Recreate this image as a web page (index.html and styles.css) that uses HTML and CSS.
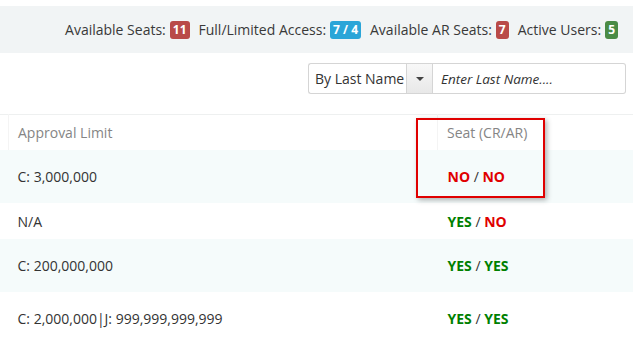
FILE: index.html
```html
<!DOCTYPE html>
<html lang="en">
<head>
  <meta charset="UTF-8">
  <meta name="viewport" content="width=device-width, initial-scale=1.0">
  <title>Users</title>
  <link rel="stylesheet" href="styles.css">
</head>
<body>
  <div class="stats-bar">
    <span class="stat">Available Seats: <span class="badge badge-red">11</span></span>
    <span class="stat">Full/Limited Access: <span class="badge badge-blue">7 / 4</span></span>
    <span class="stat">Available AR Seats: <span class="badge badge-red">7</span></span>
    <span class="stat">Active Users: <span class="badge badge-green">5</span></span>
  </div>

  <div class="search-row">
    <div class="select-box">By Last Name</div>
    <div class="select-btn"><span class="caret"></span></div>
    <input class="search-input" type="text" placeholder="Enter Last Name....">
  </div>

  <div class="table-wrap">
    <table class="users-table">
      <thead>
        <tr>
          <th class="spacer"></th>
          <th class="col-limit">Approval Limit</th>
          <th class="col-seat">Seat (CR/AR)</th>
        </tr>
      </thead>
      <tbody>
        <tr class="tall odd">
          <td class="spacer"></td>
          <td>C: 3,000,000</td>
          <td class="seat"><span class="no">NO</span> / <span class="no">NO</span></td>
        </tr>
        <tr class="short">
          <td class="spacer"></td>
          <td>N/A</td>
          <td class="seat"><span class="yes">YES</span> / <span class="no">NO</span></td>
        </tr>
        <tr class="tall odd">
          <td class="spacer"></td>
          <td>C: 200,000,000</td>
          <td class="seat"><span class="yes">YES</span> / <span class="yes">YES</span></td>
        </tr>
        <tr class="tall">
          <td class="spacer"></td>
          <td>C: 2,000,000|J: 999,999,999,999</td>
          <td class="seat"><span class="yes">YES</span> / <span class="yes">YES</span></td>
        </tr>
      </tbody>
    </table>
    <div class="highlight"></div>
  </div>
</body>
</html>
```

FILE: styles.css
```css
body {
  margin: 0;
  font-family: "Open Sans", Arial, sans-serif;
  font-size: 14px;
  color: #393939;
  background: #fff;
}
.stats-bar {
  margin-top: 6px;
  height: 47px;
  background: #f1f4f5;
  display: flex;
  justify-content: flex-end;
  align-items: center;
  padding-right: 15px;
  gap: 9px;
}
.stat {
  display: flex;
  align-items: center;
  gap: 4px;
}
.badge {
  display: inline-block;
  color: #fff;
  font-weight: bold;
  font-size: 12px;
  line-height: 18px;
  height: 18px;
  padding: 0 3px;
  border-radius: 3px;
}
.badge-red { background: #b94a48; }
.badge-blue { background: #2aa5d8; }
.badge-green { background: #4a8b45; }

.search-row {
  margin-top: 10px;
  display: flex;
  justify-content: flex-end;
  padding-right: 7px;
  height: 31px;
}
.select-box {
  width: 98px;
  box-sizing: border-box;
  border: 1px solid #d5d5d5;
  border-right: none;
  border-radius: 3px 0 0 3px;
  padding-left: 6px;
  line-height: 29px;
  font-size: 14px;
  color: #333;
  white-space: nowrap;
  overflow: hidden;
}
.select-btn {
  width: 27px;
  box-sizing: border-box;
  border: 1px solid #d5d5d5;
  background: linear-gradient(#f8f8f8, #e8e8e8);
  display: flex;
  align-items: center;
  justify-content: center;
}
.caret {
  width: 0;
  height: 0;
  border-left: 4px solid transparent;
  border-right: 4px solid transparent;
  border-top: 4px solid #444;
}
.search-input {
  width: 193px;
  box-sizing: border-box;
  border: 1px solid #d5d5d5;
  border-left: none;
  border-radius: 0 3px 3px 0;
  padding: 0 8px;
  font-family: "Open Sans", Arial, sans-serif;
  font-size: 13.5px;
  font-style: italic;
  outline: none;
}
.search-input::placeholder {
  color: #333;
}

.table-wrap {
  position: relative;
  margin-top: 20px;
}
.users-table {
  width: 100%;
  border-collapse: collapse;
  border-top: 1px solid #eef0f0;
}
.users-table th {
  height: 35px;
  text-align: left;
  font-weight: normal;
  color: #858585;
  padding: 0 9px;
  border-left: 1px solid #f4f4f4;
}
.users-table th.spacer,
.users-table td.spacer {
  width: 8px;
  padding: 0;
  border: none;
}
.users-table th.col-limit {
  width: 410px;
}
.users-table td {
  padding: 0 9px;
  color: #333;
}
.users-table td.seat {
  padding-left: 10px;
}
.users-table tr.tall td { height: 53px; }
.users-table tr.short td { height: 36px; }
.users-table tr.odd { background: #f5fbfb; }
.yes { color: #008000; font-weight: bold; }
.no { color: #e00000; font-weight: bold; }

.highlight {
  position: absolute;
  left: 416px;
  top: 4px;
  width: 129px;
  height: 80px;
  box-sizing: border-box;
  border: 2px solid #e00000;
  box-shadow: 2px 2px 5px rgba(0, 0, 0, 0.3);
}
```
